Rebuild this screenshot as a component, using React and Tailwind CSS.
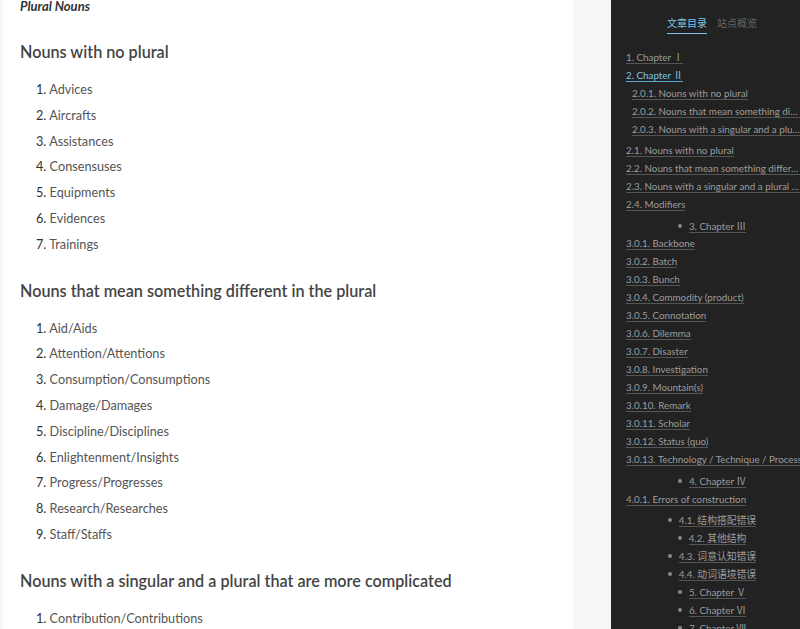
import React from 'react';

const sections = [
  {
    title: 'Nouns with no plural',
    items: ['Advices', 'Aircrafts', 'Assistances', 'Consensuses', 'Equipments', 'Evidences', 'Trainings'],
  },
  {
    title: 'Nouns that mean something different in the plural',
    items: [
      'Aid/Aids',
      'Attention/Attentions',
      'Consumption/Consumptions',
      'Damage/Damages',
      'Discipline/Disciplines',
      'Enlightenment/Insights',
      'Progress/Progresses',
      'Research/Researches',
      'Staff/Staffs',
    ],
  },
  {
    title: 'Nouns with a singular and a plural that are more complicated',
    items: ['Contribution/Contributions', 'Countryside/Countrysides'],
  },
];

// kind: 'top' = flush left, 'sub' = small indent, 'dot' = centered bullet item
const toc = [
  { text: '1. Chapter Ⅰ', kind: 'top' },
  { text: '2. Chapter Ⅱ', kind: 'top', active: true },
  { text: '2.0.1. Nouns with no plural', kind: 'sub' },
  { text: '2.0.2. Nouns that mean something different in the plural', kind: 'sub' },
  { text: '2.0.3. Nouns with a singular and a plural that are more complicated', kind: 'sub' },
  { text: '2.1. Nouns with no plural', kind: 'top', mt: 'mt-[3px]' },
  { text: '2.2. Nouns that mean something different in the plural', kind: 'top' },
  { text: '2.3. Nouns with a singular and a plural that are more complicated', kind: 'top' },
  { text: '2.4. Modifiers', kind: 'top' },
  { text: '3. Chapter Ⅲ', kind: 'dot', mt: 'mt-[4px]' },
  { text: '3.0.1. Backbone', kind: 'top', mt: '-mt-[1px]' },
  { text: '3.0.2. Batch', kind: 'top' },
  { text: '3.0.3. Bunch', kind: 'top' },
  { text: '3.0.4. Commodity (product)', kind: 'top' },
  { text: '3.0.5. Connotation', kind: 'top' },
  { text: '3.0.6. Dilemma', kind: 'top' },
  { text: '3.0.7. Disaster', kind: 'top' },
  { text: '3.0.8. Investigation', kind: 'top' },
  { text: '3.0.9. Mountain(s)', kind: 'top' },
  { text: '3.0.10. Remark', kind: 'top' },
  { text: '3.0.11. Scholar', kind: 'top' },
  { text: '3.0.12. Status (quo)', kind: 'top' },
  { text: '3.0.13. Technology / Technique / Process', kind: 'wide' },
  { text: '4. Chapter Ⅳ', kind: 'dot', mt: 'mt-[4px]' },
  { text: '4.0.1. Errors of construction', kind: 'top' },
  { text: '4.1. 结构搭配错误', kind: 'dot', mt: 'mt-[3px]' },
  { text: '4.2. 其他结构', kind: 'dot' },
  { text: '4.3. 词意认知错误', kind: 'dot' },
  { text: '4.4. 动词语境错误', kind: 'dot' },
  { text: '5. Chapter Ⅴ', kind: 'dot' },
  { text: '6. Chapter Ⅵ', kind: 'dot' },
  { text: '7. Chapter Ⅶ', kind: 'dot' },
];

function TocLink({ text, active, clip }) {
  return (
    <span
      className={`inline-block leading-[12px] border-b ${clip ? 'max-w-full truncate' : ''} ${
        active ? 'text-[#7cc4ea] border-[#5aa7d2]' : 'text-[#9c9c9c] border-[#555]'
      }`}
    >
      {text}
    </span>
  );
}

function TocRow({ item }) {
  if (item.kind === 'dot') {
    return (
      <li className={`h-[18px] flex items-center justify-center whitespace-nowrap pr-[2px] ${item.mt || ''}`}>
        <span className="w-[4px] h-[4px] rounded-full bg-[#8a8a8a] mr-[7px]" />
        <TocLink text={item.text} />
      </li>
    );
  }
  return (
    <li
      className={`h-[18px] flex items-center whitespace-nowrap ${item.kind === 'sub' ? 'pl-[6px]' : ''} ${
        item.mt || ''
      }`}
    >
      <TocLink text={item.text} active={item.active} clip={item.kind !== 'wide'} />
    </li>
  );
}

export default function App() {
  return (
    <div className="w-[800px] h-[629px] overflow-hidden flex bg-[#f5f7f9] font-['Lato','Noto_Sans_CJK_SC',sans-serif]">
      {/* 正文 */}
      <main className="ml-[3px] w-[570px] h-full bg-white px-[17px] overflow-hidden">
        <p className="-mt-[7px] text-[13px] leading-[26px] italic font-bold text-[#333]">Plural Nouns</p>

        {sections.map((section) => (
          <section key={section.title}>
            <h2 className="mt-[20px] mb-[12px] text-[16.2px] leading-[26px] font-semibold text-[#444]">
              {section.title}
            </h2>
            <ol className="pl-[16px]">
              {section.items.map((item, i) => (
                <li key={item} className="text-[12.7px] leading-[25.8px] text-[#555]">
                  <span className="text-[#333]">{i + 1}.</span> {item}
                </li>
              ))}
            </ol>
          </section>
        ))}
      </main>

      {/* 侧边栏 */}
      <aside className="ml-[38px] w-[189px] h-full bg-[#222] overflow-hidden pl-[15px] pt-[16px] text-[9.8px]">
        <div className="flex justify-center gap-[10px] text-[10px] leading-[14px] pr-[2px]">
          <span className="text-[#7cc4ea] border-b border-[#7cc4ea] pb-[3px]">文章目录</span>
          <span className="text-[#666]">站点概览</span>
        </div>

        <ul className="mt-[14px]">
          {toc.map((item) => (
            <TocRow key={item.text} item={item} />
          ))}
        </ul>
      </aside>
    </div>
  );
}
